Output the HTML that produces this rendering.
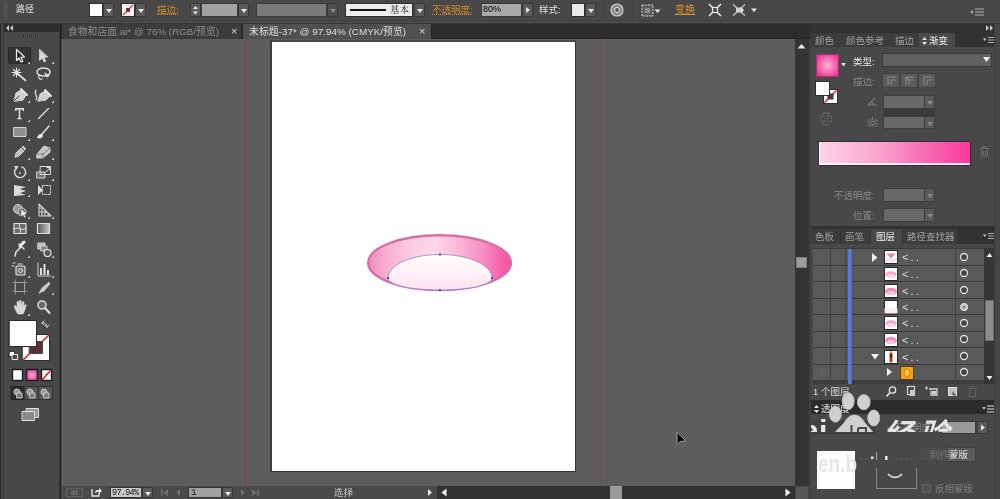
<!DOCTYPE html>
<html lang="zh-CN">
<head>
<meta charset="utf-8">
<title>Illustrator</title>
<style>
*{box-sizing:border-box;margin:0;padding:0}
html,body{width:1000px;height:499px;overflow:hidden;background:#484848}
body{position:relative;font-family:"Liberation Sans","Noto Sans CJK SC",sans-serif;font-size:9px;line-height:10px;color:#d8d8d8;-webkit-font-smoothing:antialiased}
.a{position:absolute}
.t{position:absolute;white-space:nowrap;font-size:9.5px;line-height:10px;height:10px}
.or{color:#d98a2b}
.dim{color:#8a8a8a}
.dd{position:absolute;background:#5b5b5b;border:1px solid #383838}
.dd:after{content:"";position:absolute;left:50%;top:50%;margin:-1px 0 0 -3px;border:3px solid transparent;border-top:4px solid #e6e6e6;border-bottom:0}
.dd.off:after{border-top-color:#8a8a8a}
.fld{position:absolute;background:#686868;border:1px solid #3c3c3c}
svg{position:absolute;overflow:visible}
</style>
</head>
<body>
<div id="root" style="position:absolute;left:0;top:0;width:1000px;height:499px;will-change:transform">

<!-- ================= CONTROL BAR ================= -->
<div class="a" id="ctrl" style="left:0;top:0;width:1000px;height:22px;background:#484848"></div>
<div class="a" style="left:0;top:20px;width:1000px;height:1px;background:#404040"></div>
<div class="a" style="left:0;top:22px;width:1000px;height:1px;background:#4d4d4d"></div>
<div class="a" style="left:0;top:23px;width:1000px;height:1px;background:#363636"></div>
<!-- grip -->
<div class="a" style="left:4px;top:2px;width:1px;height:18px;background:#5a5a5a"></div>
<div class="a" style="left:6px;top:2px;width:1px;height:18px;background:#5a5a5a"></div>
<div class="t" style="left:16px;top:4px;color:#e4e4e4;font-size:9px">路径</div>
<div class="a" style="left:81px;top:2px;width:1px;height:18px;background:#424242"></div>
<!-- fill swatch -->
<div class="a" style="left:89px;top:3px;width:14px;height:14px;background:#fff;border:1px solid #2e2e2e"></div>
<div class="dd" style="left:103px;top:3px;width:11px;height:14px"></div>
<!-- stroke swatch -->
<div class="a" style="left:121px;top:3px;width:14px;height:14px;background:#fbeff0;border:1px solid #2e2e2e"></div>
<svg style="left:121px;top:3px" width="14" height="14"><line x1="2" y1="12" x2="12" y2="2" stroke="#c03a3a" stroke-width="1.3"/><rect x="5" y="5" width="4" height="4" fill="#5a3a3a"/></svg>
<div class="dd" style="left:135px;top:3px;width:11px;height:14px"></div>
<div class="t or" style="left:157px;top:5px;text-decoration:underline dotted">描边:</div>
<!-- spinner -->
<div class="a" style="left:190px;top:3px;width:11px;height:14px;background:#5b5b5b;border:1px solid #383838"></div>
<svg style="left:190px;top:3px" width="11" height="14"><path d="M3 6 L5.5 3 L8 6Z M3 8.5 L5.5 11.5 L8 8.5Z" fill="#e6e6e6"/></svg>
<div class="a" style="left:201px;top:3px;width:37px;height:14px;background:#a2a2a2;border:1px solid #3a3a3a"></div>
<div class="dd" style="left:238px;top:3px;width:11px;height:14px"></div>
<!-- variable width profile -->
<div class="a" style="left:256px;top:3px;width:71px;height:14px;background:#7a7a7a;border:1px solid #3c3c3c"></div>
<div class="dd off" style="left:327px;top:3px;width:11px;height:14px;background:#505050"></div>
<!-- brush definition -->
<div class="a" style="left:345px;top:3px;width:68px;height:14px;background:#ededed;border:1px solid #2e2e2e"></div>
<div class="a" style="left:350px;top:9px;width:36px;height:2px;background:#111"></div>
<div class="t" style="left:390px;top:5px;color:#222;font-family:'Liberation Serif','Noto Serif CJK SC',serif">基本</div>
<div class="dd" style="left:414px;top:3px;width:11px;height:14px"></div>
<div class="t or" style="left:432px;top:5px;text-decoration:underline dotted">不透明度:</div>
<div class="a" style="left:481px;top:3px;width:41px;height:14px;background:#a8a8a8;border:1px solid #3a3a3a"></div>
<div class="t" style="left:483px;top:4px;color:#000;font-size:9px">80%</div>
<div class="a" style="left:522px;top:3px;width:11px;height:14px;background:#5b5b5b;border:1px solid #383838"></div>
<svg style="left:522px;top:3px" width="11" height="14"><path d="M4 4 L8 7 L4 10Z" fill="#e6e6e6"/></svg>
<div class="t" style="left:539px;top:5px;color:#e0e0e0">样式:</div>
<div class="a" style="left:571px;top:3px;width:14px;height:14px;background:#e9e9e9;border:1px solid #2e2e2e"></div>
<div class="dd" style="left:585px;top:3px;width:11px;height:14px"></div>
<div class="a" style="left:603px;top:2px;width:1px;height:18px;background:#404040"></div>
<!-- recolor globe -->
<svg style="left:610px;top:3px" width="14" height="14"><circle cx="7" cy="7" r="6" fill="#8a8a8a" stroke="#d4d4d4" stroke-width="1.2"/><circle cx="7" cy="7" r="2.5" fill="#555" stroke="#eee" stroke-width="1"/></svg>
<div class="a" style="left:632px;top:2px;width:1px;height:18px;background:#404040"></div>
<!-- align icon -->
<svg style="left:641px;top:4px" width="20" height="13"><rect x="1" y="1" width="11" height="11" fill="#5a5a5a" stroke="#cfcfcf" stroke-width="1" stroke-dasharray="2 1"/><rect x="4" y="4" width="5" height="5" fill="#8a8a8a"/><path d="M13.5 5.5 L19.5 5.5 L16.5 9Z" fill="#e6e6e6"/></svg>
<div class="t or" style="left:675px;top:5px;text-decoration:underline;font-size:10px;color:#e0912e">变换</div>
<!-- isolate icon -->
<svg style="left:708px;top:3px" width="14" height="14"><path d="M1 1 L5 5 M13 1 L9 5 M1 13 L5 9 M13 13 L9 9" stroke="#e6e6e6" stroke-width="1.6"/><rect x="4.5" y="4.5" width="5" height="5" fill="none" stroke="#e6e6e6" stroke-width="1.2"/></svg>
<!-- select similar icon -->
<svg style="left:732px;top:3px" width="26" height="14"><path d="M1 1.500 L5 5 M13 1.500 L9 5 M1 12.500 L5 9 M13 12.500 L9 9" stroke="#bdbdbd" stroke-width="1.500"/><rect x="4" y="4.500" width="6" height="5" fill="#cfcfcf"/><path d="M9 4 L12 7 L9 10Z" fill="#eaeaea"/><path d="M19 5.500 L25 5.500 L22 9Z" fill="#e6e6e6"/></svg>
<!-- right menu icon -->
<svg style="left:970px;top:8px" width="16" height="10"><path d="M0 4 L3 2 L3 6Z" fill="#aaa"/><path d="M5 1h9M5 4h9M5 7h9" stroke="#8f8f8f" stroke-width="1.4"/></svg>

<!-- ================= DOCUMENT TAB BAR ================= -->
<div class="a" id="tabbar" style="left:61px;top:24px;width:748px;height:15px;background:#2c2c2c;border-bottom:1px solid #242424"></div>
<div class="a" style="left:62px;top:24px;width:180px;height:15px;background:#3c3c3c;border-right:1px solid #262626"></div>
<div class="t" style="left:68px;top:26px;color:#8e8e8e;font-size:9.800px;line-height:11px;height:11px">食物和店面.ai* @ 76% (RGB/预览)</div>
<div class="t" style="left:231px;top:26px;color:#d8d8d8;font-size:11px">×</div>
<div class="a" style="left:243px;top:24px;width:189px;height:16px;background:#505050;border-right:1px solid #222"></div>
<div class="t" style="left:249px;top:26px;color:#dedede;font-size:9.900px;line-height:11px;height:11px">未标题-37* @ 97.94% (CMYK/预览)</div>
<div class="t" style="left:419px;top:26px;color:#d8d8d8;font-size:11px">×</div>

<!-- ================= CANVAS ================= -->
<div class="a" id="canvas" style="left:61px;top:39px;width:734px;height:447px;background:#5d5d5d"></div>
<!-- guides -->
<div class="a" style="left:244px;top:39px;width:3px;height:447px;background:linear-gradient(90deg,#68544f,#6e4e50,#6e5558)"></div>
<div class="a" style="left:599px;top:39px;width:3px;height:447px;background:linear-gradient(90deg,#635c59,#6a524e,#645a59)"></div>
<!-- artboard -->
<div class="a" style="left:270px;top:40px;width:306px;height:432px;background:#fff;border:1px solid #333;border-width:2px 1px 1px 2px;border-top-color:#4a4a4a;border-left-color:#3e3e3e"></div>
<!-- plate artwork -->
<svg style="left:340px;top:210px" width="200" height="100" viewBox="340 210 200 100">
<defs>
<linearGradient id="gOuter" x1="0" x2="1" y1="0" y2="0">
<stop offset="0" stop-color="#f08bbc"/><stop offset=".12" stop-color="#f6add1"/><stop offset=".3" stop-color="#fbcde2"/><stop offset=".47" stop-color="#fcd8e9"/><stop offset=".62" stop-color="#fab9d8"/><stop offset=".8" stop-color="#f78fc3"/><stop offset=".92" stop-color="#f466ac"/><stop offset="1" stop-color="#f0509f"/>
</linearGradient>
<linearGradient id="gOuterS" x1="0" x2="0" y1="0" y2="1">
<stop offset="0" stop-color="#d9709f"/><stop offset=".6" stop-color="#d66eaa"/><stop offset="1" stop-color="#c66cbc"/>
</linearGradient>
<linearGradient id="gInner" x1="0" x2="0" y1="0" y2="1">
<stop offset="0" stop-color="#ffffff"/><stop offset="1" stop-color="#fde3ef"/>
</linearGradient>
</defs>
<ellipse cx="439.600" cy="262.700" rx="71.400" ry="27.400" fill="url(#gOuter)" stroke="url(#gOuterS)" stroke-width="2.400"/>
<path d="M388 278 C388 265 411 254.5 440 254.5 C469 254.5 492 265 492 278 C492 285 469 290 440 290 C411 290 388 285 388 278Z" fill="url(#gInner)" stroke="#9a7ac8" stroke-width=".8"/>
<g fill="#5a4ab0"><rect x="439" y="253.5" width="2" height="2"/><rect x="387" y="277" width="2" height="2"/><rect x="491" y="277" width="2" height="2"/><rect x="439" y="289" width="2" height="2"/></g>
</svg>
<!-- mouse cursor -->
<svg style="left:670px;top:428px" width="24" height="22" viewBox="670 428 24 22"><path d="M677 432.300 L677 444.600 L680.200 441.600 L685.800 440.800Z" fill="#060606" stroke="#a8a8a8" stroke-width=".9" stroke-linejoin="round"/></svg>
<!-- vertical scrollbar -->
<div class="a" style="left:795px;top:39px;width:14px;height:447px;background:#343434"></div>
<svg style="left:795px;top:41px" width="13" height="10"><path d="M2.500 7.500 L6.500 3 L10.500 7.500Z" fill="#e8e8e8"/></svg>
<div class="a" style="left:796px;top:257px;width:11px;height:11px;background:#9c9c9c;border:1px solid #7c7c7c"></div>
<!-- horizontal scrollbar -->
<div class="a" style="left:437px;top:486px;width:358px;height:13px;background:#323232"></div>
<svg style="left:440px;top:487px" width="8" height="11"><path d="M6.5 1.5 L1.5 5.5 L6.5 9.5Z" fill="#f0f0f0"/></svg>
<svg style="left:784px;top:487px" width="8" height="11"><path d="M1.5 1.5 L6.5 5.5 L1.5 9.5Z" fill="#f0f0f0"/></svg>
<div class="a" style="left:610px;top:486px;width:12px;height:13px;background:#9c9c9c"></div>
<div class="a" style="left:796px;top:487px;width:12px;height:12px;background:#565656"></div>

<!-- ================= TOOLBOX ================= -->
<div class="a" id="toolbox" style="left:0;top:24px;width:61px;height:475px;background:#484848"></div>
<div class="a" style="left:0;top:24px;width:1px;height:475px;background:#282828"></div>
<div class="a" style="left:3px;top:24px;width:1px;height:475px;background:#393939"></div>
<div class="a" style="left:59px;top:24px;width:1px;height:475px;background:#373737"></div>
<div class="a" style="left:60px;top:24px;width:1px;height:475px;background:#1e1e1e"></div>
<div class="a" style="left:61px;top:39px;width:1px;height:460px;background:#4e4e4e"></div>
<div class="a" style="left:4px;top:24px;width:55px;height:8px;background:#2d2d2d"></div>
<svg style="left:6px;top:25px" width="8" height="6"><path d="M3 0 L0 3 L3 6Z M7 0 L4 3 L7 6Z" fill="#cfcfcf"/></svg>
<div class="a" style="left:23px;top:35px;width:16px;height:3px;background:repeating-linear-gradient(90deg,#2f2f2f 0 1px,#5a5a5a 1px 2px)"></div>
<svg id="tools" style="left:0;top:0" width="61" height="499" viewBox="0 0 61 499" fill="none" stroke-linecap="round" stroke-linejoin="round">
<!-- selected tool bg -->
<rect x="8.500" y="47.500" width="22" height="16" rx="1" fill="#333" stroke="#2a2a2a"/>
<!-- selection arrow -->
<path d="M16.500 49.500 L16.500 60.500 L19.200 58 L21 62 L22.800 61.200 L21 57.300 L24.500 57Z" fill="#222" stroke="#f2f2f2" stroke-width="1.200"/>
<!-- direct selection -->
<path d="M39.500 49.500 L39.500 60.500 L42.200 58 L44 62 L45.800 61.200 L44 57.300 L47.500 57Z" fill="#d6d6d6" stroke="#d6d6d6" stroke-width=".8"/>
<!-- magic wand -->
<path d="M18 74 L25.500 80.500" stroke="#d8d8d8" stroke-width="1.800"/><path d="M16.500 68 L16.500 77 M12 72.500 L21 72.500 M13.500 69.500 L19.500 75.500 M19.500 69.500 L13.500 75.500" stroke="#e6e6e6" stroke-width="1.100"/>
<!-- lasso -->
<ellipse cx="43.500" cy="72" rx="6.500" ry="4" stroke="#dcdcdc" stroke-width="1.500"/><path d="M39 75 C38 78 40 80 42 79" stroke="#dcdcdc" stroke-width="1.200"/><path d="M44 72 L50 76 L47 77 L48 80Z" fill="#e6e6e6" stroke="none"/>
<!-- pen -->
<path d="M14 101 L16 93 L21 90 L26 95 L23 100 Z" fill="#cfcfcf" stroke="#e6e6e6" stroke-width=".8"/><path d="M14 101 L19 96" stroke="#444" stroke-width="1"/><path d="M21 89 L27 95" stroke="#e6e6e6" stroke-width="2"/>
<!-- curvature -->
<path d="M38 101 L40 94 L45 91 L50 96 L46 100 Z" fill="#cfcfcf" stroke="#e6e6e6" stroke-width=".8"/><path d="M45 90 L51 96" stroke="#e6e6e6" stroke-width="2"/><path d="M36 90 C33 94 39 96 36 100" stroke="#dcdcdc" stroke-width="1.200"/>
<!-- type -->
<path d="M15.500 108.700 L23.500 108.700 M15.800 108 L15.800 111 M23.200 108 L23.200 111 M19.500 108.500 L19.500 118.500 M17.500 118.500 L21.500 118.500" stroke="#e8e8e8" stroke-width="1.400" stroke-linecap="butt"/>
<!-- line -->
<path d="M38.500 118.500 L48.500 108.500" stroke="#dcdcdc" stroke-width="1.400"/>
<!-- rectangle -->
<rect x="14" y="127.500" width="12" height="9" fill="#8f8f8f" stroke="#d2d2d2" stroke-width="1"/>
<!-- brush -->
<path d="M49 126 L42 134" stroke="#dcdcdc" stroke-width="1.600"/><path d="M37 138 C38 134 41 133 43 135 C43 138 40 139 37 138Z" fill="#e6e6e6" stroke="none"/>
<!-- pencil -->
<path d="M15 157 L16 153 L23 146 L26 149 L19 156 Z" fill="#bdbdbd" stroke="#e0e0e0" stroke-width=".8"/><path d="M21.500 147.500 L24.500 150.500" stroke="#555" stroke-width="1"/>
<!-- eraser -->
<path d="M37 154 L44 146 L50 148 L50 152 L43 158 L37 158Z" fill="#c6c6c6" stroke="#e6e6e6" stroke-width=".8"/><path d="M37 154 L43 154 L50 148 M43 154 L43 158" stroke="#666" stroke-width=".8"/>
<!-- rotate -->
<path d="M16.500 168 A5.500 5.500 0 1 0 22 167" stroke="#d8d8d8" stroke-width="1.400"/><path d="M14 166 L18.500 166 L16.500 170Z" fill="#d8d8d8" stroke="none"/><circle cx="20" cy="173" r=".9" fill="#ddd" stroke="none"/>
<!-- scale -->
<rect x="37" y="172" width="8" height="6" fill="#777" stroke="#d6d6d6" stroke-width="1"/><rect x="40.500" y="166.500" width="10" height="8" stroke="#d6d6d6" stroke-width="1"/><path d="M46 172 L50 167.500 M50 167.500 L47 167.500 M50 167.500 L50 170.500" stroke="#e6e6e6" stroke-width="1"/>
<g transform="translate(0 -3)">
<!-- width -->
<path d="M14 188 L26 190 L20 192 L26 194 L20 196 L26 198 L14 199Z" fill="#dadada" stroke="none"/>
<!-- free transform -->
<path d="M38 188 L43 193 L38 198Z" fill="#e0e0e0" stroke="none"/><rect x="42.500" y="188.500" width="8" height="9" stroke="#cfcfcf" stroke-width="1" stroke-dasharray="2 1.500"/>
</g>
<!-- shape builder -->
<circle cx="18" cy="209" r="4.500" fill="#9a9a9a" stroke="#d6d6d6" stroke-width="1"/><circle cx="22" cy="212" r="4" fill="#7a7a7a" stroke="#d6d6d6" stroke-width=".8"/><path d="M21 209 L21 217 L23 215 L24.500 218 L26 217.300 L24.600 214.500 L27 214.300Z" fill="#eee" stroke="#333" stroke-width=".4"/>
<!-- perspective grid -->
<path d="M39 204 L39 216 L51 216 M39 204 L51 216 M42 207.500 L42 216 M45 210.500 L45 216 M48 213.500 L48 216 M39 208 L43 208 M39 212 L47 212" stroke="#d8d8d8" stroke-width="1.100"/>
<!-- mesh -->
<rect x="14" y="223.500" width="12" height="10" fill="#6a6a6a" stroke="#e0e0e0" stroke-width="1.200"/><path d="M14 229 C18 226 22 232 26 228 M20 223.500 C18 227 22 230 20 233.500" stroke="#e6e6e6" stroke-width="1"/>
<!-- gradient -->
<rect x="37.500" y="223.500" width="12" height="10" fill="url(#tg)" stroke="#e0e0e0" stroke-width="1.200"/>
<defs><linearGradient id="tg" x1="0" x2="1"><stop offset="0" stop-color="#555"/><stop offset="1" stop-color="#c8c8c8"/></linearGradient>
<radialGradient id="pk" cx=".5" cy=".5" r=".6"><stop offset="0" stop-color="#f9a9d3"/><stop offset="1" stop-color="#e83c98"/></radialGradient></defs>
<!-- eyedropper -->
<path d="M15 256 L16 252 L21 247" stroke="#dcdcdc" stroke-width="1.600"/><path d="M20 246 L24 242" stroke="#f0f0f0" stroke-width="3"/><path d="M19 244 L24 249" stroke="#e6e6e6" stroke-width="1.400"/>
<!-- blend -->
<rect x="38" y="243" width="7" height="6" fill="#b8b8b8" stroke="#ddd" stroke-width=".8"/><rect x="41" y="246" width="6" height="5" fill="#8a8a8a" stroke="#ddd" stroke-width=".8"/><circle cx="47.500" cy="253" r="3.500" fill="#5a5a5a" stroke="#e6e6e6" stroke-width="1.200"/>
<!-- symbol sprayer -->
<rect x="16" y="266" width="9" height="9" rx="1" fill="#6a6a6a" stroke="#e0e0e0" stroke-width="1.200"/><circle cx="20.500" cy="270.500" r="2" stroke="#e6e6e6" stroke-width="1"/><path d="M18 264 L22 264 M13 263 L15 263 M12 266 L14 266" stroke="#dcdcdc" stroke-width="1.200"/>
<!-- graph -->
<path d="M38 263 L38 276 L51 276" stroke="#d0d0d0" stroke-width="1"/><path d="M41 275 L41 268 M44.500 275 L44.500 264 M48 275 L48 270" stroke="#e0e0e0" stroke-width="2" stroke-linecap="butt"/>
<g transform="translate(0 -2)">
<!-- artboard -->
<rect x="15.500" y="284.500" width="9" height="9" stroke="#bdbdbd" stroke-width="1"/><path d="M13 284.500 L27 284.500 M13 293.500 L27 293.500 M15.500 282 L15.500 296 M24.500 282 L24.500 296" stroke="#9a9a9a" stroke-width=".8"/>
<!-- slice -->
<path d="M39 295 L42 290 L49 284 L50 286 L44 293Z" fill="#c8c8c8" stroke="#ddd" stroke-width=".6"/>
</g>
<!-- hand -->
<path d="M16 311 L14 306 L15.500 305.500 L17 308 L17 301.500 L18.500 301.500 L19 306 L19.500 300.500 L21 300.500 L21.300 306 L22.500 301.500 L24 302 L23.500 307 L25 304.500 L26.300 305 L24.500 311 L23 314 L18 314Z" fill="#d6d6d6" stroke="#e6e6e6" stroke-width=".5"/>
<!-- zoom -->
<circle cx="42" cy="305" r="4" stroke="#d8d8d8" stroke-width="1.600" fill="#666"/><path d="M45 308 L49.500 313" stroke="#d8d8d8" stroke-width="2.200"/>
<!-- small corner triangles -->
<g fill="#cfcfcf" stroke="none">
<path d="M30 64 l-2.500 0 l2.500 -2.500z M54 64 l-2.500 0 l2.500 -2.500z M30 103 l-2.500 0 l2.500 -2.500z M54 103 l-2.500 0 l2.500 -2.500z M30 122 l-2.500 0 l2.500 -2.500z M54 122 l-2.500 0 l2.500 -2.500z M30 141 l-2.500 0 l2.500 -2.500z M54 141 l-2.500 0 l2.500 -2.500z M30 160 l-2.500 0 l2.500 -2.500z M54 160 l-2.500 0 l2.500 -2.500z M30 181 l-2.500 0 l2.500 -2.500z M54 181 l-2.500 0 l2.500 -2.500z M30 197 l-2.500 0 l2.500 -2.500z M30 219 l-2.500 0 l2.500 -2.500z M54 219 l-2.500 0 l2.500 -2.500z M30 258 l-2.500 0 l2.500 -2.500z M54 258 l-2.500 0 l2.500 -2.500z M30 278 l-2.500 0 l2.500 -2.500z M54 278 l-2.500 0 l2.500 -2.500z M54 295 l-2.500 0 l2.500 -2.500z M30 316 l-2.500 0 l2.500 -2.500z"/>
</g>
<!-- fill / stroke -->
<rect x="22.500" y="334.500" width="27" height="26" fill="#fff" stroke="#2a2a2a"/>
<path d="M23 360 L49 335" stroke="#d0202a" stroke-width="1.600"/>
<rect x="29.500" y="341.500" width="13" height="12" fill="#5a3036" stroke="#444"/>
<rect x="9.500" y="320.500" width="27" height="26" fill="#fff" stroke="#2a2a2a"/>
<!-- swap + default -->
<path d="M42 323 C45 322 47 324 47 327 M42 323 l2 -2 M42 323 l2 2 M47 327 l-2 -2 M47 327 l2 -2" stroke="#d0d0d0" stroke-width="1"/>
<rect x="9.500" y="351.500" width="5" height="5" fill="#fff" stroke="#222" stroke-width=".8"/><rect x="12.500" y="354.500" width="5" height="5" fill="#444" stroke="#eee" stroke-width="1"/>
<!-- color / gradient / none -->
<rect x="12.500" y="369.500" width="10" height="11" fill="#fff" stroke="#1e1e1e" stroke-width="1.400"/>
<rect x="26.500" y="369.500" width="11" height="11" fill="url(#pk)" stroke="#1e1e1e" stroke-width="1.400"/>
<rect x="41.500" y="369.500" width="10" height="11" fill="#fff" stroke="#1e1e1e" stroke-width="1.400"/><path d="M42.500 379.500 L50.500 370.500" stroke="#d0202a" stroke-width="1.600"/>
<g transform="translate(0 1)">
<!-- draw modes -->
<rect x="11.500" y="385.500" width="13" height="13" fill="#2e2e2e" stroke="#222"/>
<rect x="24.500" y="385.500" width="14" height="13" fill="#555" stroke="#333"/><rect x="38.500" y="385.500" width="14" height="13" fill="#555" stroke="#333"/>
<g stroke="#d0d0d0" stroke-width=".9"><circle cx="17" cy="391" r="3" fill="#999"/><rect x="17" y="392" width="5" height="5" fill="#777"/><circle cx="30" cy="391" r="3" fill="#999"/><rect x="30" y="392" width="5" height="5" fill="#777"/><circle cx="44" cy="391" r="3" fill="#999"/><rect x="44" y="392" width="5" height="5" fill="#777"/></g>
</g>
<!-- screen mode -->
<rect x="26.500" y="408.500" width="12" height="9" fill="#9a9a9a" stroke="#e0e0e0" stroke-width="1"/><rect x="22.500" y="411.500" width="12" height="9" fill="#8a8a8a" stroke="#e0e0e0" stroke-width="1"/>
</svg>

<!-- ================= STATUS BAR ================= -->
<div class="a" id="status" style="left:61px;top:486px;width:376px;height:13px;background:#4a4a4a"></div>
<svg style="left:66px;top:488px" width="17" height="9"><rect x=".5" y=".5" width="16" height="8" fill="none" stroke="#6e6e6e" stroke-dasharray="2 1"/><rect x="5" y="2" width="7" height="5" fill="#666"/></svg>
<svg style="left:91px;top:488px" width="12" height="9"><path d="M1 1 L1 8 L8 8 L8 5" fill="none" stroke="#e0e0e0" stroke-width="1.4"/><path d="M4 5 C4 2 6 2 8 2 L8 0 L11 3 L8 6 L8 4 C6 4 5 4 4 5Z" fill="#e8e8e8"/></svg>
<div class="a" style="left:110px;top:487px;width:32px;height:11px;background:#c9c9c9;border:1px solid #333"></div>
<div class="t" style="left:112px;top:488px;color:#111;font-family:'Liberation Mono','Noto Sans CJK SC',monospace;font-size:8.500px;letter-spacing:-.7px">97.94%</div>
<div class="dd" style="left:142px;top:487px;width:11px;height:11px"></div>
<svg style="left:160px;top:488px" width="100" height="9"><g fill="#6f6f6f"><rect x="1" y="1" width="1.5" height="7"/><path d="M8 1 L3 4.5 L8 8Z"/><path d="M20 1 L16 4.5 L20 8Z"/><path d="M81 1 L85 4.5 L81 8Z"/><path d="M92 1 L97 4.5 L92 8Z"/><rect x="97.500" y="1" width="1.500" height="7"/></g></svg>
<div class="a" style="left:188px;top:487px;width:34px;height:11px;background:#a2a2a2;border:1px solid #333"></div>
<div class="t" style="left:191px;top:488px;color:#111;font-family:'Liberation Mono',monospace">1</div>
<div class="dd" style="left:222px;top:487px;width:11px;height:11px"></div>
<div class="t" style="left:334px;top:488px;color:#e6e6e6;font-family:'Liberation Serif','Noto Serif CJK SC',serif">选择</div>
<svg style="left:427px;top:488px" width="6" height="9"><path d="M1 1 L5 4.5 L1 8Z" fill="#e6e6e6"/></svg>

<!-- ================= RIGHT DOCK ================= -->
<div class="a" id="dock" style="left:809px;top:24px;width:191px;height:475px;background:#313131"></div>
<div class="a" style="left:809px;top:39px;width:3px;height:460px;background:#404040"></div>
<svg style="left:986px;top:25px" width="8" height="6"><path d="M0 0 L3 3 L0 6Z M4 0 L7 3 L4 6Z" fill="#cfcfcf"/></svg>

<!-- ======== GRADIENT PANEL ======== -->
<div class="a" style="left:811px;top:33px;width:185px;height:14px;background:#323232"></div>
<div class="a" style="left:811px;top:33px;width:108px;height:14px;background:#3c3c3c"></div>
<div class="a" style="left:919px;top:33px;width:36px;height:15px;background:#4a4a4a"></div>
<div class="a" style="left:811px;top:47px;width:185px;height:179px;background:#484848"></div>
<div class="t" style="left:815px;top:36px;color:#a0a0a0">颜色</div>
<div class="t" style="left:846px;top:36px;color:#a0a0a0">颜色参考</div>
<div class="t" style="left:895px;top:36px;color:#a0a0a0">描边</div>
<svg style="left:922px;top:37px" width="5" height="8"><path d="M2.500 0 L5 3 L0 3Z M2.500 8 L5 5 L0 5Z" fill="#e6e6e6"/></svg>
<div class="t" style="left:929px;top:36px;color:#f0f0f0">渐变</div>
<svg style="left:982px;top:36px" width="13" height="8"><path d="M1 2.500 L4.500 2.500 L2.700 5Z" fill="#c8c8c8"/><path d="M6 1.500h6M6 4h6M6 6.500h6" stroke="#a8a8a8" stroke-width="1.200"/></svg>
<!-- gradient swatch -->
<div class="a" style="left:816px;top:54px;width:23px;height:23px;background:radial-gradient(circle at 50% 50%,#fbb3d8 0,#f673b7 45%,#ea3a96 85%);border:1px solid #b02a70"></div>
<svg style="left:841px;top:63px" width="5" height="4"><path d="M0 0 L5 0 L2.500 3.500Z" fill="#d8d8d8"/></svg>
<div class="t" style="left:853px;top:57px;color:#e8e8e8">类型:</div>
<div class="a" style="left:882px;top:53px;width:110px;height:14px;background:#616161;border:1px solid #3a3a3a"></div>
<svg style="left:983px;top:57px" width="7" height="6"><path d="M0 0 L7 0 L3.500 5Z" fill="#f0f0f0"/></svg>
<div class="t dim" style="left:853px;top:77px">描边:</div>
<div class="a" style="left:882px;top:73px;width:18px;height:15px;background:#5a5a5a;border:1px solid #424242"></div>
<div class="a" style="left:900px;top:73px;width:18px;height:15px;background:#5a5a5a;border:1px solid #424242"></div>
<div class="a" style="left:918px;top:73px;width:18px;height:15px;background:#5a5a5a;border:1px solid #424242"></div>
<svg style="left:883px;top:73px" width="54" height="14" fill="none" stroke="#858585" stroke-width="1.200"><path d="M5 12 L5 4 L13 4 M8 12 L8 7 L13 7"/><path d="M23 12 L23 4 L31 4 M26 12 L26 7 L31 7 M23 4 L26 7"/><path d="M41 12 L41 4 L49 4 M44 12 L44 7 L49 7"/></svg>
<!-- fill/stroke mini -->
<div class="a" style="left:823px;top:89px;width:15px;height:15px;background:#fff;border:1px solid #2e2e2e"></div>
<svg style="left:823px;top:89px" width="15" height="15"><path d="M1.500 13.500 L13.500 1.500" stroke="#d0202a" stroke-width="1.500"/><rect x="4.500" y="4.500" width="6" height="6" fill="#5a3036"/></svg>
<div class="a" style="left:815px;top:81px;width:15px;height:15px;background:#fff;border:1px solid #2e2e2e"></div>
<!-- reverse icon -->
<svg style="left:819px;top:112px" width="14" height="14" fill="none" stroke="#6c6c6c" stroke-width="1.100"><rect x="1.500" y="4.500" width="4" height="5" stroke-dasharray="1.500 1"/><rect x="8.500" y="4.500" width="4" height="5" stroke-dasharray="1.500 1"/><path d="M3 3 C5 0 9 0 11 3 M3 11 C5 14 9 14 11 11"/></svg>
<!-- angle -->
<svg style="left:867px;top:97px" width="11" height="9" fill="none" stroke="#7a7a7a" stroke-width="1.100"><path d="M10 8 L1 8 L8 1"/><path d="M6 8 C6 6 5 5 4 5"/></svg>
<div class="a" style="left:883px;top:108px;width:52px;height:8px;background:#3b3b3b"></div>
<div class="fld" style="left:883px;top:95px;width:42px;height:14px"></div><div class="dd off" style="left:924px;top:95px;width:11px;height:14px;background:#5a5a5a;border-color:#3c3c3c"></div>
<svg style="left:867px;top:117px" width="11" height="10" fill="none" stroke="#7a7a7a" stroke-width="1.100"><rect x="1" y="3" width="9" height="6" stroke-dasharray="2 1"/><ellipse cx="5.500" cy="6" rx="2.500" ry="1.500"/><path d="M5.500 0 L5.500 3"/></svg>
<div class="fld" style="left:883px;top:116px;width:42px;height:13px"></div><div class="dd off" style="left:924px;top:116px;width:11px;height:13px;background:#5a5a5a;border-color:#3c3c3c"></div>
<!-- gradient ramp -->
<div class="a" style="left:818px;top:141px;width:153px;height:25px;background:linear-gradient(90deg,#fdd4e7 0,#f9a4cd 40%,#f768b2 72%,#f8399b 100%);border:1px solid #3a2a32;box-shadow:inset 1px -2px 0 rgba(255,255,255,.85)"></div>
<svg style="left:980px;top:146px" width="9" height="11" fill="none" stroke="#6f6f6f" stroke-width="1.100"><path d="M0 2.500 L9 2.500 M3 2.500 L3 .8 L6 .8 L6 2.500 M1.500 4 L1.500 10 L7.500 10 L7.500 4 M3.500 5 L3.500 9 M5.500 5 L5.500 9"/></svg>
<div class="t dim" style="left:834px;top:191px">不透明度:</div>
<div class="fld" style="left:883px;top:188px;width:42px;height:14px"></div><div class="dd off" style="left:924px;top:188px;width:11px;height:14px;background:#5a5a5a;border-color:#3c3c3c"></div>
<div class="t dim" style="left:853px;top:211px">位置:</div>
<div class="fld" style="left:883px;top:208px;width:42px;height:14px"></div><div class="dd off" style="left:924px;top:208px;width:11px;height:14px;background:#5a5a5a;border-color:#3c3c3c"></div>

<!-- ======== LAYERS PANEL ======== -->
<div class="a" style="left:811px;top:229px;width:185px;height:15px;background:#323232"></div>
<div class="a" style="left:811px;top:229px;width:146px;height:15px;background:#3c3c3c"></div>
<div class="a" style="left:840px;top:230px;width:1px;height:14px;background:#333"></div>
<div class="a" style="left:870px;top:230px;width:1px;height:14px;background:#333"></div>
<div class="a" style="left:902px;top:230px;width:1px;height:14px;background:#333"></div>
<div class="a" style="left:871px;top:229px;width:31px;height:16px;background:#484848"></div>
<div class="a" style="left:811px;top:244px;width:185px;height:156px;background:#484848"></div>
<div class="t" style="left:815px;top:232px;color:#a0a0a0">色板</div>
<div class="t" style="left:845px;top:232px;color:#a0a0a0">画笔</div>
<div class="t" style="left:876px;top:232px;color:#f0f0f0">图层</div>
<div class="t" style="left:907px;top:232px;color:#a0a0a0">路径查找器</div>
<svg style="left:982px;top:232px" width="13" height="8"><path d="M1 2.500 L4.500 2.500 L2.700 5Z" fill="#c8c8c8"/><path d="M6 1.500h6M6 4h6M6 6.500h6" stroke="#a8a8a8" stroke-width="1.200"/></svg>
<div class="a" style="left:813px;top:248px;width:171px;height:136px;background:#595959;border-top:1px solid #3b3b3b"></div>
<div class="a" style="left:813px;top:265px;width:171px;height:1px;background:#3b3b3b"></div>
<svg style="left:884px;top:250px" width="14" height="14"><rect width="14" height="14" fill="#262626"/><g transform="translate(.5 .5)"><rect x=".5" y=".5" width="12" height="12" fill="#fff"/><path d="M2 3 L11 3 L6.500 8Z" fill="#e486b4"/><path d="M1 8 L12 8 L12 12 L1 12Z" fill="#fbe4ee"/></g></svg>
<div class="t" style="left:902px;top:252px;color:#dcdcdc;font-size:11px;letter-spacing:2.200px">&lt;..</div>
<svg style="left:959px;top:252px" width="10" height="10"><circle cx="5" cy="5" r="3.500" fill="#444" stroke="#e0e0e0" stroke-width="1.300"/></svg>
<div class="a" style="left:813px;top:281px;width:171px;height:1px;background:#3b3b3b"></div>
<svg style="left:884px;top:267px" width="14" height="14"><rect width="14" height="14" fill="#262626"/><g transform="translate(.5 .5)"><rect x=".5" y=".5" width="12" height="12" fill="#fff"/><ellipse cx="6.500" cy="7" rx="5.500" ry="3.200" fill="#f3a4cb"/><ellipse cx="6.500" cy="8.500" rx="4.500" ry="2" fill="#fbd9e9"/></g></svg>
<div class="t" style="left:902px;top:269px;color:#dcdcdc;font-size:11px;letter-spacing:2.200px">&lt;..</div>
<svg style="left:959px;top:268px" width="10" height="10"><circle cx="5" cy="5" r="3.500" fill="#444" stroke="#e0e0e0" stroke-width="1.300"/></svg>
<div class="a" style="left:813px;top:298px;width:171px;height:1px;background:#3b3b3b"></div>
<svg style="left:884px;top:284px" width="14" height="14"><rect width="14" height="14" fill="#262626"/><g transform="translate(.5 .5)"><rect x=".5" y=".5" width="12" height="12" fill="#fff"/><ellipse cx="6.500" cy="7" rx="5.800" ry="3.800" fill="#ef8fc0"/><ellipse cx="6.500" cy="8.500" rx="4" ry="2" fill="#f9c6df"/></g></svg>
<div class="t" style="left:902px;top:286px;color:#dcdcdc;font-size:11px;letter-spacing:2.200px">&lt;..</div>
<svg style="left:959px;top:285px" width="10" height="10"><circle cx="5" cy="5" r="3.500" fill="#444" stroke="#e0e0e0" stroke-width="1.300"/></svg>
<div class="a" style="left:813px;top:314px;width:171px;height:1px;background:#3b3b3b"></div>
<svg style="left:884px;top:300px" width="14" height="14"><rect width="14" height="14" fill="#262626"/><g transform="translate(.5 .5)"><rect x=".5" y=".5" width="12" height="12" fill="#fff"/><rect x="0" y="8" width="13" height="5" fill="#fdeef5"/></g></svg>
<div class="t" style="left:902px;top:302px;color:#dcdcdc;font-size:11px;letter-spacing:2.200px">&lt;..</div>
<svg style="left:959px;top:302px" width="10" height="10"><circle cx="5" cy="5" r="3.400" fill="#bdbdbd" stroke="#e0e0e0" stroke-width="1.100"/><circle cx="5" cy="5" r="1" fill="#6a6a6a"/></svg>
<div class="a" style="left:813px;top:331px;width:171px;height:1px;background:#3b3b3b"></div>
<svg style="left:884px;top:316px" width="14" height="14"><rect width="14" height="14" fill="#262626"/><g transform="translate(.5 .5)"><rect x=".5" y=".5" width="12" height="12" fill="#fff"/><ellipse cx="6.500" cy="7" rx="5.500" ry="3.200" fill="#f3a4cb"/><ellipse cx="6.500" cy="8.500" rx="4.500" ry="2" fill="#fbd9e9"/></g></svg>
<div class="t" style="left:902px;top:318px;color:#dcdcdc;font-size:11px;letter-spacing:2.200px">&lt;..</div>
<svg style="left:959px;top:318px" width="10" height="10"><circle cx="5" cy="5" r="3.500" fill="#444" stroke="#e0e0e0" stroke-width="1.300"/></svg>
<div class="a" style="left:813px;top:347px;width:171px;height:1px;background:#3b3b3b"></div>
<svg style="left:884px;top:333px" width="14" height="14"><rect width="14" height="14" fill="#262626"/><g transform="translate(.5 .5)"><rect x=".5" y=".5" width="12" height="12" fill="#fff"/><ellipse cx="6.500" cy="7" rx="5.800" ry="3.800" fill="#ef8fc0"/><ellipse cx="6.500" cy="8.500" rx="4" ry="2" fill="#f9c6df"/></g></svg>
<div class="t" style="left:902px;top:335px;color:#dcdcdc;font-size:11px;letter-spacing:2.200px">&lt;..</div>
<svg style="left:959px;top:334px" width="10" height="10"><circle cx="5" cy="5" r="3.500" fill="#444" stroke="#e0e0e0" stroke-width="1.300"/></svg>
<div class="a" style="left:813px;top:364px;width:171px;height:1px;background:#3b3b3b"></div>
<svg style="left:884px;top:350px" width="14" height="14"><rect width="14" height="14" fill="#262626"/><g transform="translate(.5 .5)"><rect x=".5" y=".5" width="12" height="12" fill="#fff"/><rect x="5" y="2" width="3" height="10" rx="1" fill="#c8381e"/><rect x="5.500" y="4" width="2" height="3" fill="#3a1a10"/><rect x="5.800" y="0.500" width="1.500" height="2" fill="#e8a020"/></g></svg>
<div class="t" style="left:902px;top:352px;color:#dcdcdc;font-size:11px;letter-spacing:2.200px">&lt;..</div>
<svg style="left:959px;top:351px" width="10" height="10"><circle cx="5" cy="5" r="3.500" fill="#444" stroke="#e0e0e0" stroke-width="1.300"/></svg>
<div class="a" style="left:813px;top:380px;width:171px;height:4px;background:#3d3d3d"></div>
<svg style="left:900px;top:366px" width="14" height="14"><rect width="14" height="14" fill="#5a3a10"/><rect x="1" y="1" width="12" height="12" fill="#f2a318"/><ellipse cx="7" cy="7" rx="3" ry="4" fill="#f7d23a" stroke="#c86a10" stroke-width=".8"/></svg>
<svg style="left:959px;top:367px" width="10" height="10"><circle cx="5" cy="5" r="3.500" fill="#444" stroke="#e0e0e0" stroke-width="1.300"/></svg>
<div class="a" style="left:830px;top:249px;width:1px;height:135px;background:#424242"></div>
<div class="a" style="left:845px;top:249px;width:1px;height:135px;background:#424242"></div>
<div class="a" style="left:955px;top:249px;width:1px;height:135px;background:#424242"></div>
<div class="a" style="left:848px;top:249px;width:4px;height:135px;background:linear-gradient(90deg,#5a78d6 0,#5a78d6 75%,#4a5ea8 100%)"></div>
<svg style="left:872px;top:253px" width="6" height="9"><path d="M0 0 L5.500 4.500 L0 9Z" fill="#f0f0f0"/></svg>
<svg style="left:871px;top:354px" width="9" height="6"><path d="M0 0 L8 0 L4 5.500Z" fill="#f0f0f0"/></svg>
<svg style="left:887px;top:368px" width="6" height="8"><path d="M0 0 L5 4 L0 8Z" fill="#f0f0f0"/></svg>
<svg style="left:816px;top:368px" width="11" height="8" fill="none" stroke="#6c6c6c" stroke-width="1"><ellipse cx="5.500" cy="4" rx="4.500" ry="3"/><circle cx="5.500" cy="4" r="1.200"/></svg>
<div class="a" style="left:984px;top:248px;width:10px;height:136px;background:#363636"></div>
<svg style="left:984px;top:251px" width="11" height="8"><path d="M2.500 6 L5.500 2 L8.500 6Z" fill="#f0f0f0"/></svg>
<svg style="left:984px;top:374px" width="11" height="8"><path d="M2.500 2 L5.500 6 L8.500 2Z" fill="#f0f0f0"/></svg>
<div class="a" style="left:985px;top:300px;width:9px;height:41px;background:#8c8c8c;border:1px solid #6a6a6a"></div>
<div class="t" style="left:813px;top:387px;color:#dcdcdc">1 个图层</div>
<svg style="left:885px;top:385px" width="95" height="13" fill="none"><circle cx="7.500" cy="5" r="3.200" stroke="#e6e6e6" stroke-width="1.300"/><path d="M5 7.500 L1.500 11.500" stroke="#e6e6e6" stroke-width="1.600"/><rect x="22.500" y="1.500" width="7" height="8" stroke="#d8d8d8" stroke-width="1.200"/><rect x="25" y="5" width="5" height="6" fill="#ccc"/><path d="M40 3 L43 3 M41.500 1.500 L41.500 4.500" stroke="#e0e0e0" stroke-width="1"/><path d="M44 4 L52 4 L52 10 L46 10 L46 6" stroke="#d8d8d8" stroke-width="1.300"/><rect x="47" y="6" width="4" height="3" fill="#ccc"/><rect x="63.500" y="2.500" width="8" height="8" fill="#bdbdbd" stroke="#e0e0e0" stroke-width="1"/><path d="M67.500 6.500 L71.500 10.500 L67.500 10.500Z" fill="#555"/><path d="M83 3.500 L92 3.500 M86 3.500 L86 2 L89 2 L89 3.500 M84.500 5 L84.500 11.500 L90.500 11.500 L90.500 5" stroke="#646464" stroke-width="1.100"/></svg>
<!-- ======== TRANSPARENCY PANEL ======== -->
<div class="a" style="left:811px;top:400px;width:185px;height:14px;background:#2b2b2b"></div>
<div class="a" style="left:811px;top:414px;width:185px;height:85px;background:#484848"></div>
<svg style="left:814px;top:405px" width="5" height="8"><path d="M2.500 0 L5 3 L0 3Z M2.500 8 L5 5 L0 5Z" fill="#e6e6e6"/></svg>
<div class="t" style="left:821px;top:404px;color:#e8e8e8">透明度</div>
<svg style="left:982px;top:405px" width="13" height="8"><path d="M0 2 L4 2 L2 5Z" fill="#b0b0b0"/><path d="M5 1h7M5 4h7M5 7h7" stroke="#a8a8a8" stroke-width="1.300"/></svg>
<!-- blend mode row -->
<div class="a" style="left:813px;top:421px;width:62px;height:13px;background:#424242;border:1px solid #3c3c3c"></div>

<div class="t" style="left:893px;top:423px;color:#8a8a8a">不透明度:</div>
<div class="a" style="left:941px;top:421px;width:35px;height:13px;background:#9a9a9a;border:1px solid #3a3a3a"></div>
<div class="a" style="left:977px;top:421px;width:11px;height:13px;background:#5b5b5b;border:1px solid #383838"></div>
<svg style="left:977px;top:421px" width="11" height="13"><path d="M4 3.500 L8 6.500 L4 9.500Z" fill="#e6e6e6"/></svg>
<!-- watermark (cropped) -->
<div class="a" style="left:811px;top:388px;width:142px;height:44px;overflow:hidden">
<svg style="left:0;top:0" width="142" height="60" viewBox="811 388 142 60">
<g fill="#d0d0d0" stroke="#bcbcbc" stroke-width=".8">
<ellipse cx="848.200" cy="401.200" rx="6" ry="8.400"/>
<ellipse cx="863.800" cy="402.200" rx="6.400" ry="7.600"/>
<ellipse cx="835.400" cy="414.200" rx="6" ry="8"/>
<ellipse cx="873.700" cy="418" rx="6" ry="8"/>
<path d="M827 440 C835 432 842 426 846 420 C848.500 416.500 851.500 415 854.500 415 C857.500 415 860.500 416.500 863 420 C867 426 873 432 881 440Z"/>
</g>
<path d="M851.500 425 L851.500 440 M858 428 L866 428 L866 440 M858 428 L858 440" stroke="#4a4a4a" stroke-width="2" fill="none"/>
<text x="780.700" y="441" font-family="'Liberation Sans',sans-serif" font-weight="bold" font-size="30" fill="#e8e8e8">Bai</text>
<text x="883" y="444.500" font-family="'Liberation Sans','Noto Sans CJK SC',sans-serif" font-weight="bold" font-style="italic" font-size="30" fill="#e4e4e4" textLength="66">经验</text>
</svg>
</div>
<!-- thumbnails -->
<div class="a" style="left:817px;top:451px;width:38px;height:38px;background:#fff"></div>
<svg style="left:811px;top:450px" width="60" height="26" viewBox="811 450 60 26"><text x="818" y="471.500" font-family="'Liberation Sans',sans-serif" font-weight="bold" font-size="23" fill="#e6e6e6" textLength="39" lengthAdjust="spacingAndGlyphs">en.b</text></svg>
<div class="a" style="left:876px;top:468px;width:41px;height:21px;border:1px solid #8a8a8a;border-top:0"></div>
<svg style="left:886px;top:472px" width="18" height="8"><path d="M2 2 C6 6.500 12 6.500 16 2" fill="none" stroke="#d6d6d6" stroke-width="1.800"/></svg>
<svg style="left:858px;top:450px" width="60" height="12"><path d="M2 9h56" stroke="#5a5a5a" stroke-dasharray="3 2"/><rect x="18" y="2" width="1" height="8" fill="#a8a8a8"/><rect x="27" y="6" width="2.500" height="4" fill="#e8e8e8"/><rect x="13" y="6.500" width="2.500" height="2.500" fill="#e0e0e0"/></svg>
<div class="a" style="left:918px;top:447px;width:58px;height:15px;background:#5a5a5a;border:1px solid #3e3e3e"></div>
<div class="t" style="left:930px;top:450px;color:#e0e0e0">制作蒙版</div>
<div class="a" style="left:918px;top:447px;width:30px;height:15px;background:#484848;opacity:.75"></div>
<div class="a" style="left:922px;top:484px;width:9px;height:9px;border:1px solid #626262;background:#505050"></div>
<div class="t" style="left:935px;top:484px;color:#7e7e7e">反相蒙版</div>
<div class="a" style="left:994px;top:24px;width:6px;height:475px;background:#464646;border-left:1px solid #3a3a3a"></div>


</div>
</body>
</html>
